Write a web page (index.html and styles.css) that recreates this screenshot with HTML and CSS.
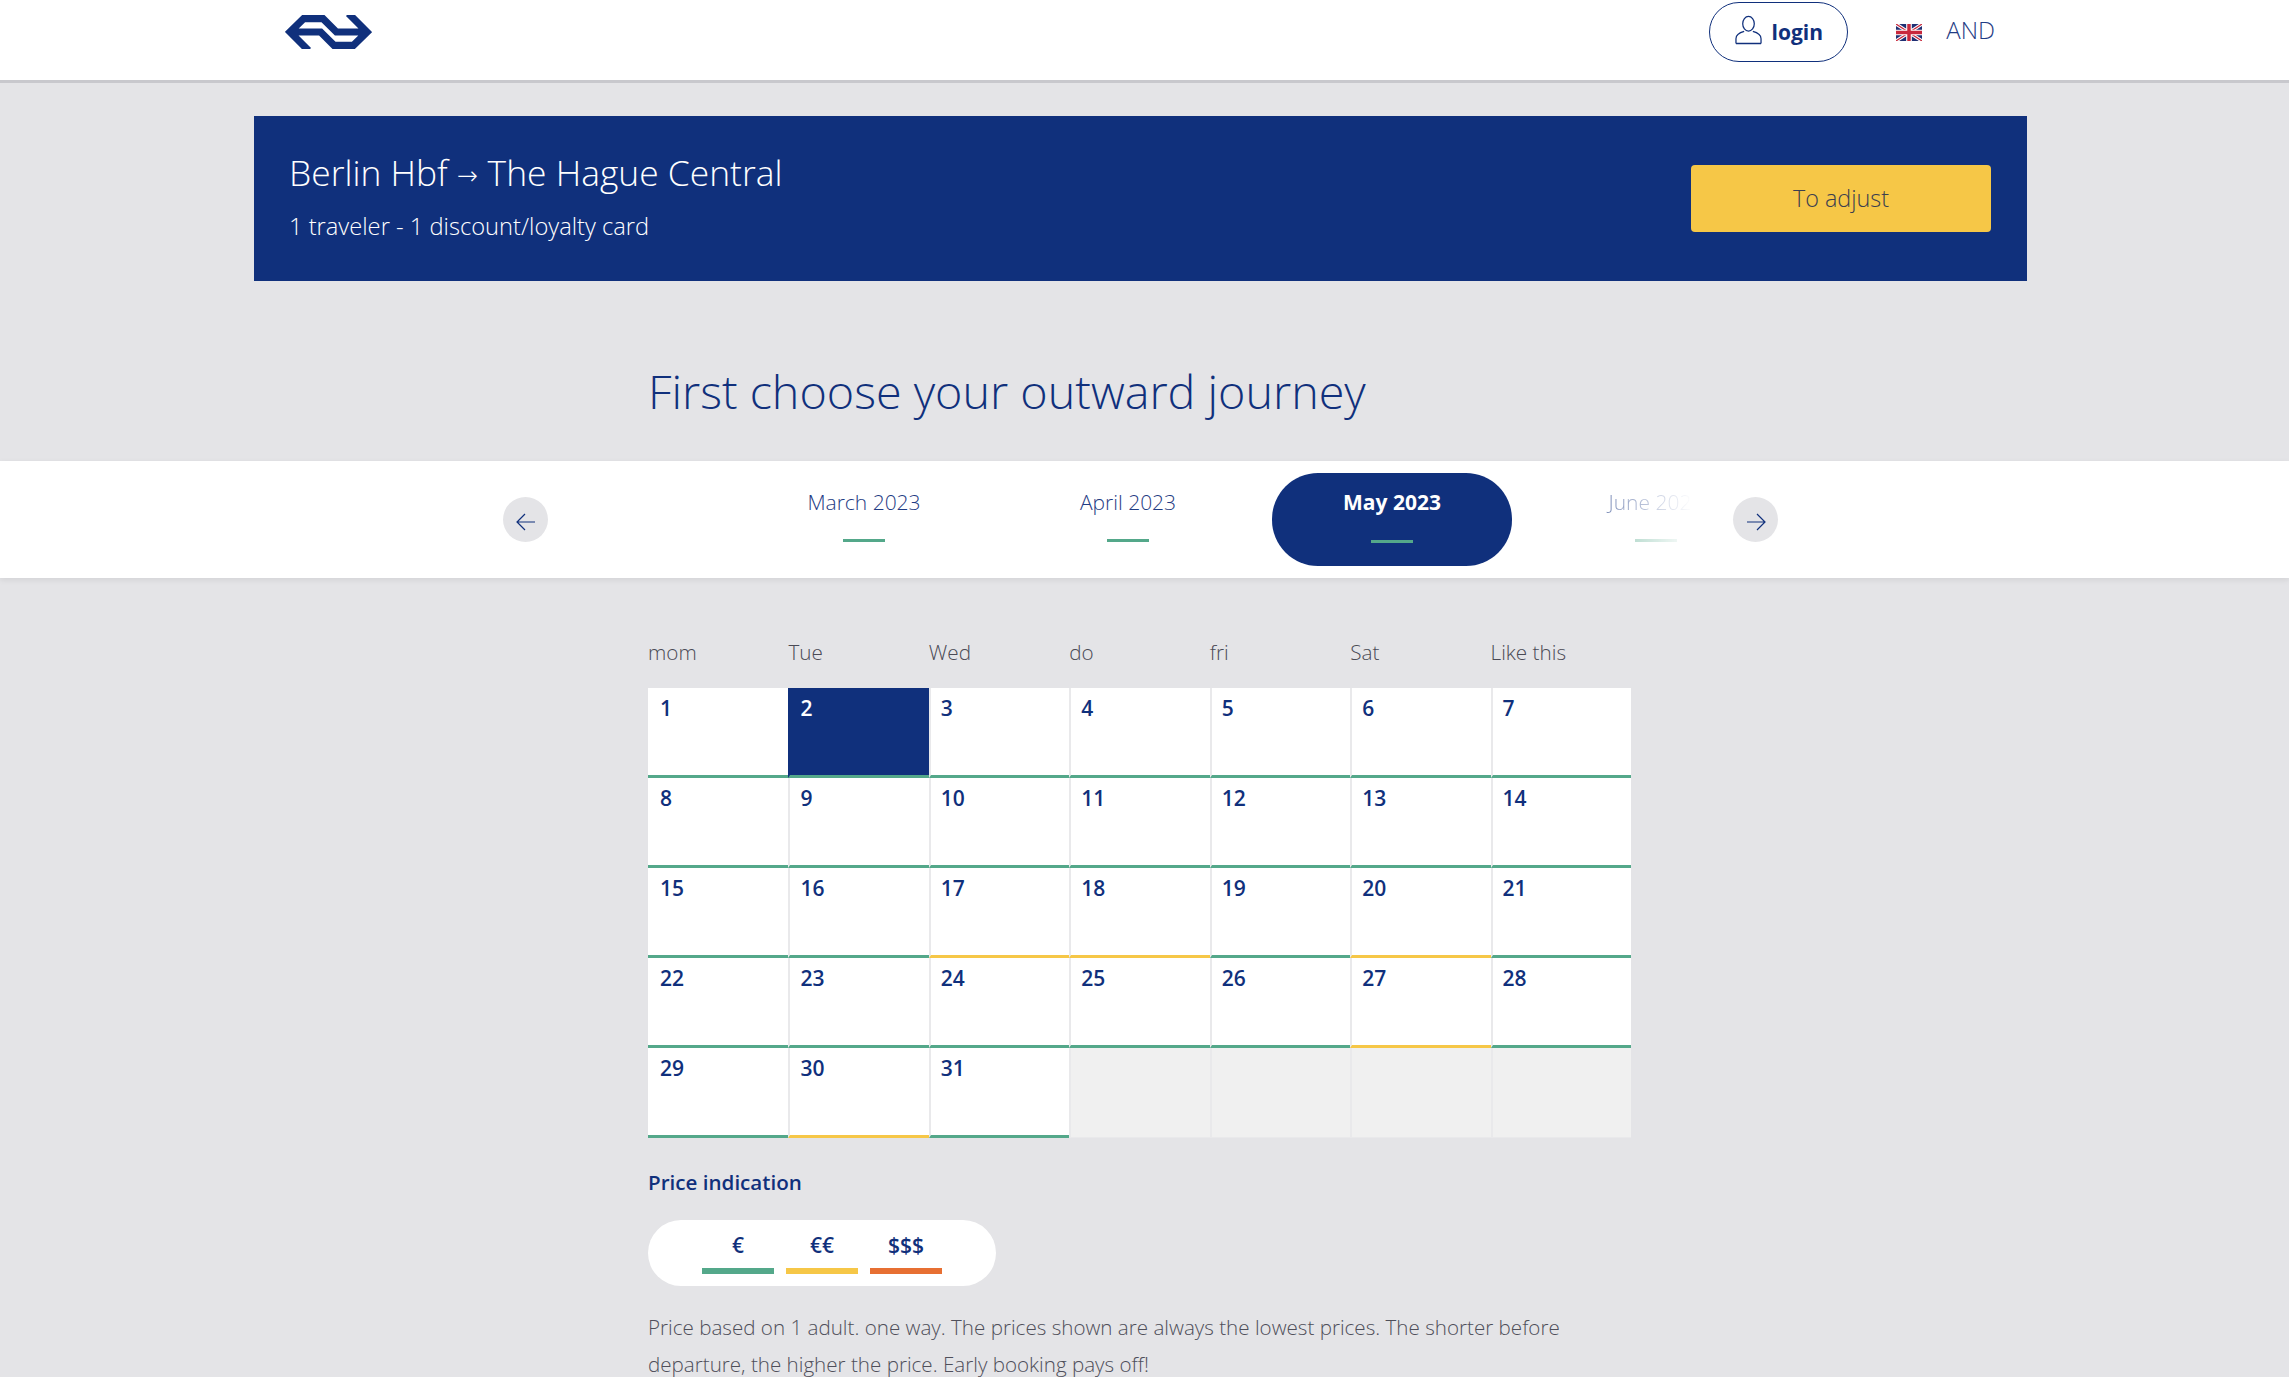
FILE: index.html
```html
<!DOCTYPE html>
<html lang="en">
<head>
<meta charset="utf-8">
<title>First choose your outward journey</title>
<link rel="stylesheet" href="styles.css">
</head>
<body>
<header class="top">
  <div class="top-inner">
    <svg class="logo" viewBox="0 0 87 34"><path fill="none" stroke="#10307c" stroke-width="7.2" stroke-miterlimit="4" d="M23.5 35.5L5 17L18.6 3.6H38L51.4 17H82M63.5 -1.5L82 17L68.4 30.4H49L35.6 17H5"/></svg>
    <div class="top-right">
      <a class="login">
        <svg class="user" viewBox="0 0 28 30"><ellipse cx="14" cy="8.5" rx="6" ry="7.6" fill="none" stroke="#10307c" stroke-width="1.3"/><path d="M1 29V24C1 20 4 18 9.5 16.5M27 29V24C27 20 24 18 18.500 16.500M1 29H27" fill="none" stroke="#10307c" stroke-width="1.3"/></svg>
        <span>login</span>
      </a>
      <svg class="flag" viewBox="0 0 60 40" preserveAspectRatio="none"><rect width="60" height="40" fill="#1f2f73"/><path d="M0 0L60 40M60 0L0 40" stroke="#fff" stroke-width="8"/><path d="M0 0L60 40M60 0L0 40" stroke="#c8283c" stroke-width="3"/><path d="M30 0V40M0 20H60" stroke="#fff" stroke-width="13"/><path d="M30 0V40M0 20H60" stroke="#c8283c" stroke-width="8"/></svg>
      <span class="lang">AND</span>
    </div>
  </div>
</header>

<section class="banner">
  <div class="banner-text">
    <div class="route">Berlin Hbf<span class="route-arrow">→</span>The Hague Central</div>
    <div class="travellers">1 traveler - 1 discount/loyalty card</div>
  </div>
  <a class="adjust">To adjust</a>
</section>

<div class="narrow heading-wrap"><h1>First choose your outward journey</h1></div>

<nav class="months">
  <span class="round-btn"><svg viewBox="0 0 20 20"><path d="M19 10H1M9 2L1 10L9 18" fill="none" stroke="#10307c" stroke-width="1.2"/></svg></span>
  <div class="month-track">
    <div class="month"><span>March 2023</span><i></i></div>
    <div class="month"><span>April 2023</span><i></i></div>
    <div class="month active"><span>May 2023</span><i></i></div>
    <div class="month fading"><span>June 2023</span><i></i></div>
  </div>
  <span class="round-btn"><svg viewBox="0 0 20 20"><path d="M1 10H19M11 2L19 10L11 18" fill="none" stroke="#10307c" stroke-width="1.2"/></svg></span>
</nav>

<main class="narrow">
  <div class="weekdays">
    <span>mom</span><span>Tue</span><span>Wed</span><span>do</span><span>fri</span><span>Sat</span><span>Like this</span>
  </div>
  <div class="calendar">
    <div class="day">1</div><div class="day selected">2</div><div class="day">3</div><div class="day">4</div><div class="day">5</div><div class="day">6</div><div class="day">7</div>
    <div class="day">8</div><div class="day">9</div><div class="day">10</div><div class="day">11</div><div class="day">12</div><div class="day">13</div><div class="day">14</div>
    <div class="day">15</div><div class="day">16</div><div class="day mid">17</div><div class="day mid">18</div><div class="day">19</div><div class="day mid">20</div><div class="day">21</div>
    <div class="day">22</div><div class="day">23</div><div class="day">24</div><div class="day">25</div><div class="day">26</div><div class="day mid">27</div><div class="day">28</div>
    <div class="day">29</div><div class="day mid">30</div><div class="day">31</div><div class="day none"></div><div class="day none"></div><div class="day none"></div><div class="day none"></div>
  </div>
  <h2>Price indication</h2>
  <div class="legend">
    <div class="legend-item"><b>€</b><i class="low"></i></div>
    <div class="legend-item"><b>€€</b><i class="medium"></i></div>
    <div class="legend-item"><b>$$$</b><i class="high"></i></div>
  </div>
  <p class="note">Price based on 1 adult. one way. The prices shown are always the lowest prices. The shorter before departure, the higher the price. Early booking pays off!</p>
</main>
</body>
</html>
```

FILE: styles.css
```css
* { box-sizing: border-box; }
html, body { margin: 0; height: 1377px; overflow: hidden; }
body {
  background: #e4e4e7;
  font-family: "Open Sans", "Noto Sans", sans-serif;
  font-weight: 300;
  color: #10307c;
}
.top { height: 83px; background: #fff; border-bottom: 3px solid #c8c8cd; }
.top-inner {
  width: 1773px; margin-left: 254px; padding: 0 32px 0 31px;
  display: flex; justify-content: space-between; align-items: flex-start;
}
.logo { width: 87px; height: 34px; margin-top: 15px; }
.top-right { display: flex; align-items: center; padding-top: 2px; }
.login {
  width: 139px; height: 60px; border: 1.5px solid #10307c; border-radius: 30px;
  display: flex; align-items: center; justify-content: center; gap: 10px;
  font-weight: 700; font-size: 21px;
}
.user { width: 27px; height: 30px; margin-top: -4px; }
.flag { width: 26px; height: 17px; margin-left: 48px; }
.lang { margin-left: 24px; font-size: 24px; color: #1f3c84; line-height: 1; margin-top: -4px; }

.banner {
  width: 1773px; height: 165px; margin: 33px 0 0 254px;
  background: #10307c; color: #fff;
  display: flex; justify-content: space-between; align-items: center;
  padding: 0 36px 0 35px;
}
.banner-text { padding-bottom: 7px; }
.route { font-size: 35.4px; line-height: 46px; }
.route-arrow { font-family: "DejaVu Sans", sans-serif; font-weight: 200; font-size: 25px; margin: 0 10px 0 9px; vertical-align: 2px; }
.travellers { font-size: 23.7px; line-height: 32px; margin-top: 11px; }
.adjust {
  width: 300px; height: 67px; border-radius: 4px; background: #f6c747; color: #3c3f4f;
  display: flex; align-items: center; justify-content: center; font-size: 23.4px; padding-bottom: 2px;
}

.narrow { width: 983px; margin-left: 648px; }
.heading-wrap { height: 180px; padding-top: 78px; }
h1 { margin: 0; font-size: 46.7px; font-weight: 300; line-height: 64px; }

.months {
  height: 117px; background: #fff; box-shadow: 0 2px 6px rgba(0,0,0,.08);
  display: flex; align-items: center; padding-left: 503px;
  position: relative;
}
.round-btn {
  width: 45px; height: 45px; border-radius: 50%; background: #e4e4e7;
  display: flex; align-items: center; justify-content: center; flex: none;
}
.round-btn svg { width: 20px; height: 20px; margin-top: 4px; }
.month-track {
  width: 1100px; height: 117px; margin: 0 41px 0 44px; padding-left: 152px; overflow: hidden;
  display: flex; align-items: center; gap: 24px; flex: none;
}
.month {
  width: 240px; height: 93px; flex: none; border-radius: 46px;
  display: flex; flex-direction: column; align-items: center;
  font-size: 21px; color: #1f3c84; padding-top: 14px;
}
.month span { line-height: 30px; }
.month i { display: block; width: 42px; height: 3px; background: #54a88a; margin-top: 22px; }
.month.active { background: #10307c; color: #fff; font-weight: 700; }
.month.active i { margin-top: 23px; }
.month.fading { -webkit-mask-image: linear-gradient(90deg, rgba(0,0,0,.55) 30%, transparent 65%); mask-image: linear-gradient(90deg, rgba(0,0,0,.55) 30%, transparent 65%); }

.weekdays {
  display: grid; grid-template-columns: repeat(7, 1fr);
  padding-top: 57px; height: 110px;
  font-size: 20.7px; line-height: 34px; color: #4a4a55;
}
.calendar { display: grid; grid-template-columns: repeat(7, 1fr); grid-auto-rows: 90px; }
.day {
  background: #fff; border-left: 2px solid #e9e9eb; border-bottom: 3px solid #54a88a;
  padding: 5px 10px; font-size: 21px; line-height: 30px; font-weight: 600;
}
.day:nth-child(7n+1) { border-left: 0; padding-left: 12px; }
.day.mid { border-bottom-color: #f6c747; }
.day.selected { background: #10307c; color: #fff; border-left-color: #10307c; }
.day.none { background: #f0f0f0; border-bottom: 1px solid #e9e9eb; }

h2 { margin: 30px 0 0; font-size: 20.6px; line-height: 28px; font-weight: 600; }
.legend {
  width: 348px; height: 66px; margin-top: 24px; border-radius: 33px; background: #fff;
  display: flex; justify-content: center; gap: 12px; padding-top: 11px;
}
.legend-item { width: 72px; display: flex; flex-direction: column; align-items: center; }
.legend-item b { font-size: 21px; line-height: 28px; height: 37px; font-weight: 600; }
.legend-item i { display: block; width: 72px; height: 6px; }
.low { background: #54a88a; }
.medium { background: #f6c747; }
.high { background: #e76f32; }
.note { margin: 23px 0 0; width: 930px; font-size: 20.6px; line-height: 37px; color: #4f4f5a; }
```
